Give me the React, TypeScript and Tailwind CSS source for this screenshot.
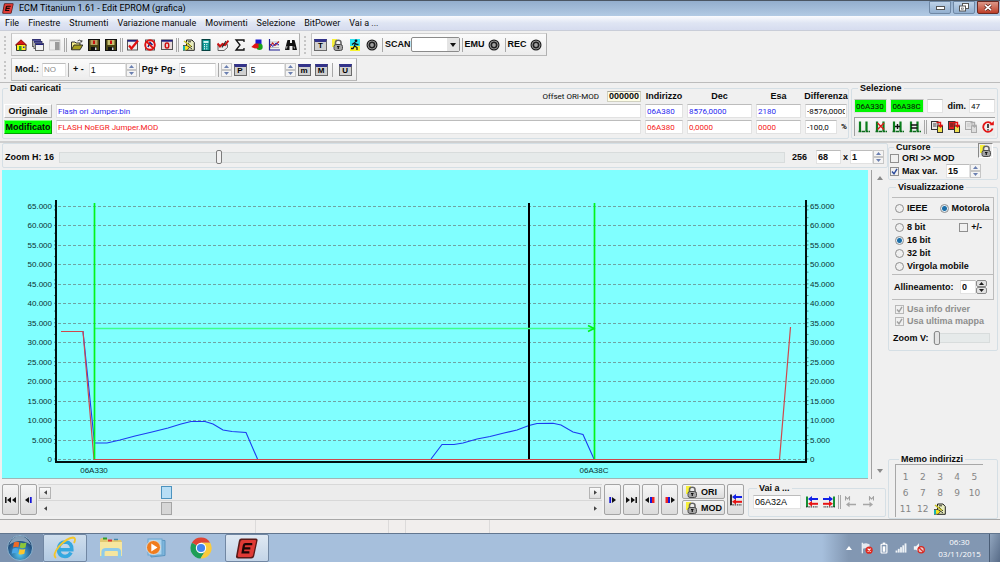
import React from "react";
import clsx from "clsx";

type Kids = { children?: React.ReactNode };

/* ---------- small building blocks ---------- */

function Ico({ children, size = "size-3", box = "0 0 12 12" }: Kids & { size?: string; box?: string }) {
  return (
    <svg viewBox={box} className={clsx("block shrink-0", size)} aria-hidden="true">
      {children}
    </svg>
  );
}

function ToolButton({ label, children }: Kids & { label: string }) {
  return (
    <button type="button" aria-label={label} className="flex h-[18px] w-[17px] shrink-0 items-center justify-center">
      {children}
    </button>
  );
}

function Sep({ double = false }: { double?: boolean }) {
  return (
    <span className="flex w-[5px] shrink-0 justify-center gap-px">
      <span className="h-[14px] w-px bg-[#a8a8a8]" />
      {double && <span className="h-[14px] w-px bg-[#a8a8a8]" />}
    </span>
  );
}

function Grip() {
  return <span className="h-[18px] w-[3px] shrink-0 border-l-2 border-dotted border-[#c6c6c6]" />;
}

function Toolbar({ children, label }: Kids & { label: string }) {
  return (
    <div
      role="toolbar"
      aria-label={label}
      className="flex h-[23px] items-center border border-t-[#d0d0d0] border-r-[#b0b0b0] border-b-[#b8b8b8] border-l-[#c4c4c4] bg-linear-to-b from-[#fbfbfb] to-[#ececec]"
    >
      {children}
    </div>
  );
}

function Spin({ label, dark = false }: { label: string; dark?: boolean }) {
  const fill = dark ? "#1a1a1a" : "#6a7fb0";
  const box = clsx(
    "flex h-[7px] items-center justify-center border",
    dark ? "rounded-[2px] border-[#8a8a8a] bg-[#e2e2e2]" : "border-[#c6c6c6] bg-[#f4f4f4]",
  );
  return (
    <span className="flex h-[14px] w-[11px] shrink-0 flex-col">
      <button type="button" aria-label={label + " su"} className={box}>
        <svg viewBox="0 0 5 3" className="h-[3px] w-[5px]"><path d="M0 3L2.500 0L5 3Z" fill={fill} /></svg>
      </button>
      <button type="button" aria-label={label + " giù"} className={box}>
        <svg viewBox="0 0 5 3" className="h-[3px] w-[5px]"><path d="M0 0L2.500 3L5 0Z" fill={fill} /></svg>
      </button>
    </span>
  );
}

function Field({ value, label, className }: { value: string; label: string; className?: string }) {
  return (
    <input
      type="text"
      aria-label={label}
      defaultValue={value}
      className={clsx(
        "h-[14px] min-w-0 rounded-none border border-[#e2e2e2] border-t-[#bcbcbc] px-px outline-none",
        className,
      )}
    />
  );
}

function LetterIcon({ letter }: { letter: string }) {
  return (
    <span className="flex h-3 w-[13px] items-end justify-center border border-t-[3px] border-[#6a6a6a] border-t-[#33338a] bg-[#d0d0d0] text-[8px] leading-[8px] font-bold text-black">
      {letter}
    </span>
  );
}

function Group({ title, className, children }: Kids & { title: string; className?: string }) {
  return (
    <fieldset className={clsx("min-w-0 rounded-[2px] border border-[#d5dfe5]", className)}>
      <legend className="ml-1 px-[2px] text-[9px] leading-[8px] font-bold whitespace-nowrap">{title}</legend>
      {children}
    </fieldset>
  );
}

/* ---------- icons ---------- */

const Lock = () => (
  <Ico size="size-3">
    <path d="M0 0H5V3H3V8H0Z" fill="#f7f03a" />
    <path d="M3.500 6V3.400Q3.500 1.200 6.200 1.200Q9 1.200 9 3.400V6" fill="none" stroke="#666" strokeWidth="1.600" />
    <rect x="2" y="5.500" width="8.500" height="6" rx="2" fill="#a4a4a4" stroke="#4c4c4c" />
    <path d="M5 7.500H7.500M6.250 7.500V10" stroke="#111" strokeWidth="1.200" />
  </Ico>
);
const Led = () => (
  <Ico>
    <circle cx="6" cy="6" r="5.500" fill="#1e1e1e" />
    <circle cx="6" cy="6" r="4" fill="none" stroke="#9c9c9c" strokeWidth="0.900" />
    <circle cx="6" cy="6" r="1.900" fill="#a0a0a0" />
  </Ico>
);
const Home = () => (
  <Ico>
    <path d="M1.500 6V11.500H11V6L6 2Z" fill="#ffee22" stroke="#333" />
    <path d="M0.500 6L6 0.800L11.500 6L9.500 5.500H2.500Z" fill="#d81818" stroke="#8a0c0c" strokeWidth="0.900" />
    <rect x="4" y="7" width="2.500" height="4.500" fill="#2a9c2a" />
    <rect x="8" y="7.500" width="1.500" height="1.500" fill="#22b" />
  </Ico>
);
const Windows = () => (
  <Ico>
    <g fill="#f2f2f2" stroke="#555" strokeWidth="0.900">
      <rect x="0.500" y="0.500" width="8" height="7" />
      <rect x="2" y="2.500" width="8" height="7" />
      <rect x="3.500" y="4.500" width="8" height="7" />
    </g>
    <path d="M0.500 1H8.500M2 3H10M3.500 5.200H11.500" stroke="#20207c" strokeWidth="1.400" />
  </Ico>
);
const Panel = () => (
  <Ico>
    <rect x="0.500" y="1" width="10.500" height="10" fill="#ececec" stroke="#cfcfcf" />
    <rect x="6" y="3" width="4.500" height="8" fill="#9a9a9a" />
    <path d="M1 1.500H11" stroke="#b5b5b5" strokeWidth="1.500" />
  </Ico>
);
const Folder = () => (
  <Ico>
    <path d="M0.500 10.500V3H4L5 4H9V6" fill="#f4ec8a" stroke="#333" />
    <path d="M0.500 10.800L3 6H11.800L9 10.800Z" fill="#a8a020" stroke="#222" strokeWidth="0.900" />
    <path d="M6.500 2Q9 0 10.500 2.500M10.800 1V3H9" fill="none" stroke="#222" strokeWidth="0.800" />
  </Ico>
);
const Disk = ({ tag }: { tag: string }) => (
  <Ico>
    <rect x="0.500" y="0.500" width="11" height="11" fill="#4a4512" stroke="#111" />
    <rect x="2.500" y="1" width="7" height="5" fill={tag} />
    <path d="M5 1.500H7V5H5Z" fill="#c11" />
    <rect x="3" y="8" width="6" height="3.500" fill="#111" />
    <rect x="7" y="8.500" width="1.500" height="2.500" fill="#ddd" />
  </Ico>
);
const WinCheck = () => (
  <Ico>
    <rect x="0.500" y="1" width="10" height="10" fill="#eee" stroke="#555" />
    <path d="M0.500 1.800H10.500" stroke="#20207c" strokeWidth="1.800" />
    <path d="M2 6.500L4.500 9.500L11 1.500" fill="none" stroke="#e01010" strokeWidth="2.200" />
  </Ico>
);
const WinNo = () => (
  <Ico>
    <rect x="1.500" y="1" width="9" height="10" fill="#eee" stroke="#555" />
    <path d="M4 8L6 3.500L8.500 6" fill="none" stroke="#20207c" strokeWidth="1.500" />
    <circle cx="6" cy="6" r="4.800" fill="none" stroke="#e01010" strokeWidth="1.900" />
    <path d="M2.600 2.600L9.400 9.400" stroke="#e01010" strokeWidth="1.900" />
  </Ico>
);
const WinZero = () => (
  <Ico>
    <rect x="0.500" y="1" width="11" height="9.500" fill="#e8dada" stroke="#555" />
    <path d="M0.500 1.800H11.500" stroke="#20207c" strokeWidth="1.800" />
    <rect x="4.300" y="4" width="3.400" height="5" rx="1.500" fill="none" stroke="#d01010" strokeWidth="1.500" />
  </Ico>
);
const Memo = () => (
  <Ico>
    <path d="M3.500 1H9L11.300 3.500V11.300H3.500Z" fill="#e9edc0" stroke="#222" />
    <path d="M5 4L9 8M5 7L9 10M5 2.800H8" stroke="#222" strokeWidth="0.900" />
    <path d="M1 2L8 7.500" stroke="#c8c020" strokeWidth="1.500" />
    <path d="M0 6.500H4L6.500 8.500L4 11.300H0Z" fill="#f2e21e" stroke="#222" strokeWidth="0.700" />
    <rect x="0" y="7" width="2" height="4.300" fill="#19b0b0" />
  </Ico>
);
const Calc = () => (
  <Ico>
    <rect x="2" y="0.500" width="8" height="11" fill="#0f9a96" stroke="#04403f" />
    <rect x="3.500" y="2" width="5" height="2" fill="#c8f2f0" />
    <path d="M4.500 5V11M6.800 5V11" stroke="#eaffff" strokeWidth="1" strokeDasharray="1.200 0.900" />
  </Ico>
);
const ChartPen = () => (
  <Ico>
    <path d="M1 6V11.500H7L10.500 8.500V5.500L5 6.500Z" fill="#ececec" stroke="#555" strokeWidth="0.900" />
    <path d="M0.500 4.500L3 7.500L5.500 5L8 6L11.500 1.500" fill="none" stroke="#c81414" strokeWidth="2" />
    <path d="M5 8.500L9 2" stroke="#222" strokeWidth="1.100" />
  </Ico>
);
const Sigma = () => (
  <Ico>
    <path d="M10 3V1H2L6 6L2 11H10V9" fill="none" stroke="#111" strokeWidth="1.300" />
  </Ico>
);
const Shapes = () => (
  <Ico>
    <rect x="4.500" y="0.500" width="6" height="5" fill="#1a1ad0" />
    <circle cx="8.500" cy="7.800" r="3.200" fill="#18a018" />
    <path d="M0.300 8L4 4.500H7.500V9L4 9.500Z" fill="#e01414" />
  </Ico>
);
const Graph = () => (
  <Ico>
    <path d="M1.500 0V11H12" fill="none" stroke="#1a1a90" strokeWidth="1.200" />
    <path d="M2 3H11M2 6H11M2 8.500H11" stroke="#999" strokeWidth="0.600" />
    <path d="M2 8L4.500 4L7 6.500L11 2.500" fill="none" stroke="#c02020" strokeWidth="1.100" />
    <path d="M2 5L5 7.500L8 4L11 6" fill="none" stroke="#2020c0" strokeWidth="1" />
  </Ico>
);
const Binoculars = () => (
  <Ico>
    <path d="M2.500 1H5V4H7V1H9.500L10.500 4.500L12 11H7.500V7H4.500V11H0L1.500 4.500Z" fill="#111" />
    <path d="M2 7L1.500 9.500M9 7.500L9.500 9.500" stroke="#ccc" strokeWidth="0.900" />
  </Ico>
);
const Runner = () => (
  <Ico>
    <rect x="1" width="10" height="12" fill="#f7f32a" />
    <rect x="1" width="10" height="7" fill="#2de4f2" />
    <circle cx="7" cy="1.800" r="1.400" fill="#111" />
    <path d="M6.500 3.500L5.500 7L8 8.500V11M5.500 7L4 9.500H2M3 5.500L5.500 3.800L8 5.500H9.500" fill="none" stroke="#111" strokeWidth="1.300" />
  </Ico>
);
const Sel = ({ mid, color }: { mid?: string; color?: string }) => (
  <Ico>
    <path d="M2 0.500V10M8.500 0.500V10" stroke="#0a7d1c" strokeWidth="2.200" />
    <path d="M0.500 10.500H12" stroke="#0a6a1a" strokeWidth="1.700" strokeDasharray="3 0.500" />
    {mid && <path d={mid} stroke={color} strokeWidth="1.400" fill="none" />}
  </Ico>
);
const Pages = ({ front, off }: { front: string; off?: boolean }) => (
  <Ico>
    <rect x="0.500" y="0.500" width="6.500" height="8" fill={front} stroke={off ? "#aaa" : "#333"} />
    <path d="M2 3H5.500M2 5H5.500" stroke={off ? "#bbb" : "#222"} strokeWidth="0.800" />
    <rect x="6.500" y="5" width="5" height="6.500" fill={off ? "#ddd" : "#f0e050"} stroke={off ? "#aaa" : "#333"} />
    <path d="M5.500 1.500H9.500V5M7.500 3.800L9.500 6L11.500 3.800" fill="none" stroke={off ? "#aaa" : "#e01010"} strokeWidth="1.400" />
  </Ico>
);
const Reload = () => (
  <Ico>
    <path d="M9.800 3A4.800 4.800 0 1 0 10.600 7.500" fill="none" stroke="#e31515" strokeWidth="1.800" />
    <path d="M7.500 4.300H11.800V0Z" fill="#e31515" />
    <path d="M6 3V7M6 8.200V9.600" stroke="#111" strokeWidth="1.500" />
  </Ico>
);
const Arrows = ({ flip = false, bar = "#0a8a2a" }: { flip?: boolean; bar?: string }) => (
  <Ico>
    <g transform={flip ? "translate(12 0) scale(-1 1)" : undefined}>
      <path d="M1 0.500V11" stroke={bar} strokeWidth="1.900" />
      <path d="M0 10.900H12" stroke="#222" strokeWidth="1" strokeDasharray="1.500 0.800" />
      <path d="M2 3L6 0V6Z" fill="#1020e8" />
      <path d="M4 3H12" stroke="#1020e8" strokeWidth="2" />
      <path d="M2 7.800L6 5V10.500Z" fill="#e81515" />
      <path d="M4 7.800H12" stroke="#e81515" strokeWidth="2" />
    </g>
  </Ico>
);
const MArrow = ({ flip = false }: { flip?: boolean }) => (
  <Ico>
    <path d="M0.500 4.500V0.800L2.500 3L4.500 0.800V4.500" transform={flip ? "translate(7 0)" : undefined} fill="none" stroke="#a0a0a0" strokeWidth="1.100" />
    <g transform={flip ? "translate(12 0) scale(-1 1)" : undefined}>
      <path d="M1 8.500L4.500 5.800V11.200Z" fill="#a6a6a6" />
      <path d="M4 8.500H11" stroke="#a6a6a6" strokeWidth="1.500" />
    </g>
  </Ico>
);

const EcmLogo = ({ size }: { size: string }) => (
  <svg viewBox="0 0 24 22" className={clsx("block shrink-0", size)} aria-hidden="true">
    <path d="M6 0.500H21.500Q23.500 0.500 23 3L19.500 19Q19 21.500 16.500 21.500H2.500Q0 21.500 0.500 19L3.500 3Q4 0.500 6 0.500Z" fill="#5b1a18" />
    <path d="M7 2H20.500Q21.800 2 21.500 3.500L18.300 18Q18 19.800 16 19.800H3.600Q2 19.800 2.300 18L5 3.800Q5.300 2 7 2Z" fill="#df3a35" />
    <path d="M17.500 6.500H10.500Q9 6.500 8.700 8L7.500 15H14.500M9 10.800H15.500" fill="none" stroke="#1c0606" strokeWidth="2.400" />
  </svg>
);

/* ---------- window chrome ---------- */

function TitleBar() {
  return (
    <header className="flex h-4 items-start justify-between border-t border-[#4b5663] bg-linear-to-b from-[#93aecd] to-[#b2cae4] pl-[2px]">
      <div className="flex h-[15px] items-center gap-[5px]">
        <EcmLogo size="h-[11px] w-3" />
        <h1 className="font-[Roboto,sans-serif] text-[9px] text-black">ECM Titanium 1.61 - Edit EPROM (grafica)</h1>
      </div>
      <div className="flex gap-[2px] pr-px">
        <button type="button" aria-label="Riduci a icona" className="flex h-[13px] w-[22px] items-center justify-center rounded-b-[2px] border border-[#6f88a5] bg-linear-to-b from-[#bed2e8] to-[#92afcf]">
          <svg viewBox="0 0 9 4" className="h-1 w-[9px]"><rect x="0.500" y="0.500" width="8" height="3" fill="#fff" stroke="#555" /></svg>
        </button>
        <button type="button" aria-label="Ripristina" className="flex h-[13px] w-[22px] items-center justify-center rounded-b-[2px] border border-[#6f88a5] bg-linear-to-b from-[#bed2e8] to-[#92afcf]">
          <svg viewBox="0 0 10 9" className="h-[9px] w-[10px]" fill="#fff" stroke="#555"><rect x="3.500" y="0.500" width="6" height="5" /><rect x="0.500" y="3" width="6" height="5" /><rect x="2.500" y="5" width="2" height="1.200" strokeWidth="0.600" /></svg>
        </button>
        <button type="button" aria-label="Chiudi" className="flex h-[13px] w-[22px] items-center justify-center rounded-b-[2px] border border-[#6b2a22] bg-linear-to-b from-[#dc9788] to-[#bd3c26]">
          <svg viewBox="0 0 8 7" className="h-[7px] w-2"><path d="M1 0.800L7 6.200M7 0.800L1 6.200" stroke="#5a2018" strokeWidth="3" /><path d="M1 0.800L7 6.200M7 0.800L1 6.200" stroke="#fff" strokeWidth="1.700" /></svg>
        </button>
      </div>
    </header>
  );
}

const menus = ["File", "Finestre", "Strumenti", "Variazione manuale", "Movimenti", "Selezione", "BitPower", "Vai a ..."];

function MenuBar() {
  return (
    <nav className="flex h-[15px] items-center gap-[9px] border-b border-[#c9cdd8] bg-linear-to-b from-[#fafbfe] via-[#dfe5f3] to-[#d6dcef] pl-[5px] font-[Roboto,sans-serif] text-[9px]">
      {menus.map((m) => (
        <button key={m} type="button" className="leading-[14px] whitespace-nowrap">{m}</button>
      ))}
    </nav>
  );
}

function Toolbars() {
  return (
    <div className="flex flex-col gap-[2px] border-b border-[#bcbcbc] px-1 pt-[2px] pb-px">
      <div className="flex items-center gap-1">
        <Grip />
        <Toolbar label="Principale">
          <ToolButton label="Home"><Home /></ToolButton>
          <ToolButton label="Finestre"><Windows /></ToolButton>
          <ToolButton label="Pannello"><Panel /></ToolButton>
          <Sep double />
          <ToolButton label="Apri"><Folder /></ToolButton>
          <ToolButton label="Salva originale"><Disk tag="#b8a060" /></ToolButton>
          <ToolButton label="Salva modificato"><Disk tag="#c8c070" /></ToolButton>
          <Sep double />
          <ToolButton label="Conferma"><WinCheck /></ToolButton>
          <ToolButton label="Annulla"><WinNo /></ToolButton>
          <ToolButton label="Azzera"><WinZero /></ToolButton>
          <Sep double />
          <ToolButton label="Note"><Memo /></ToolButton>
          <ToolButton label="Calcolatrice"><Calc /></ToolButton>
          <ToolButton label="Modifica grafico"><ChartPen /></ToolButton>
          <ToolButton label="Checksum"><Sigma /></ToolButton>
          <ToolButton label="Grafica 3D"><Shapes /></ToolButton>
          <ToolButton label="Grafica 2D"><Graph /></ToolButton>
          <ToolButton label="Cerca"><Binoculars /></ToolButton>
        </Toolbar>
        <Grip />
        <Toolbar label="Emulazione">
          <ToolButton label="Tabella"><LetterIcon letter="T" /></ToolButton>
          <ToolButton label="Blocca"><Lock /></ToolButton>
          <ToolButton label="Esegui"><Runner /></ToolButton>
          <ToolButton label="Stato"><Led /></ToolButton>
          <Sep />
          <label htmlFor="scan" className="text-[9px] font-bold">SCAN</label>
          <span className="relative flex">
            <select id="scan" className="h-[15px] w-[49px] appearance-none rounded-[2px] border border-[#8b8b8b] bg-white" defaultValue="">
              <option value=""></option>
            </select>
            <span className="pointer-events-none absolute inset-y-px right-px flex w-3 items-center justify-center bg-[#e4e4e4]">
              <svg viewBox="0 0 6 4" className="h-1 w-[6px]"><path d="M0 0H6L3 4Z" fill="#111" /></svg>
            </span>
          </span>
          <Sep />
          <span className="text-[9px] font-bold">EMU</span>
          <span className="pl-px"><ToolButton label="EMU"><Led /></ToolButton></span>
          <Sep />
          <span className="text-[9px] font-bold">REC</span>
          <span className="px-px"><ToolButton label="REC"><Led /></ToolButton></span>
        </Toolbar>
      </div>
      <div className="flex items-center gap-1">
        <Grip />
        <Toolbar label="Variazione">
          <span className="px-[3px] text-[9px] font-bold">Mod.:</span>
          <Field label="Modo" value="NO" className="w-6 bg-white text-[8px] text-[#8a8a8a]" />
          <Sep />
          <span className="px-[2px] text-[9px] font-bold">+ -</span>
          <span className="flex pl-[3px]"><Field label="Passo" value="1" className="w-[37px] bg-white text-[9px]" /></span>
          <Spin label="Passo" />
          <Sep />
          <span className="pr-[3px] text-[9px] font-bold whitespace-nowrap">Pg+ Pg-</span>
          <Field label="Pagina" value="5" className="w-[37px] bg-white text-[9px]" />
          <Sep />
          <Spin label="Pagina" />
          <ToolButton label="Percentuale"><LetterIcon letter="P" /></ToolButton>
          <Field label="Percentuale" value="5" className="w-9 bg-white text-[9px]" />
          <Spin label="Percentuale" />
          <ToolButton label="Minimo"><LetterIcon letter="m" /></ToolButton>
          <ToolButton label="Massimo"><LetterIcon letter="M" /></ToolButton>
          <Sep />
          <span className="px-[2px]"><ToolButton label="Uguale"><LetterIcon letter="U" /></ToolButton></span>
        </Toolbar>
      </div>
    </div>
  );
}

/* ---------- loaded data and selection ---------- */

function LoadedData() {
  return (
    <Group title="Dati caricati" className="flex-1 px-px">
      <div className="-mx-1 -mt-[3px]">
        <table className="w-full table-fixed border-separate border-spacing-x-1 border-spacing-y-[2px] text-left">
          <colgroup>
            <col className="w-[48px]" /><col /><col className="w-[38px]" /><col className="w-[65px]" /><col className="w-[45px]" /><col className="w-[42px]" />
          </colgroup>
          <thead className="text-center text-[9px] leading-[9px] font-bold whitespace-nowrap">
            <tr>
              <td className="p-0" />
              <td className="p-0">
                <div className="flex items-center justify-end gap-2">
                  <span className="font-[Roboto,sans-serif] text-[8px] font-normal">Offset ORI-MOD</span>
                  <span className="w-[34px] border border-[#d0d0c0] border-t-[#a8a8a0] bg-[#fdfde6] leading-[9px]">000000</span>
                </div>
              </td>
              <th className="p-0">Indirizzo</th>
              <th className="p-0">Dec</th>
              <th className="p-0">Esa</th>
              <th className="p-0"><div className="flex justify-center">Differenza</div></th>
            </tr>
          </thead>
          <tbody className="font-[Roboto,sans-serif] text-[8px] leading-none">
            <tr>
              <td className="p-0"><button type="button" className="block h-[14px] w-full border border-white border-r-[#b5b5b5] border-b-[#b5b5b5] font-['Liberation_Sans',Arial,sans-serif] text-[9px] leading-3 font-bold">Originale</button></td>
              <td className="p-0"><Field label="File originale" value="Flash ori Jumper.bin" className="block w-full bg-white text-[#2a2af0]" /></td>
              <td className="p-0"><Field label="Indirizzo originale" value="06A380" className="block w-full bg-white text-[#2a2af0]" /></td>
              <td className="p-0"><Field label="Decimale originale" value="8576,0000" className="block w-full bg-white text-[#2a2af0]" /></td>
              <td className="p-0"><Field label="Esadecimale originale" value="2180" className="block w-full bg-white text-[#2a2af0]" /></td>
              <td className="p-0"><Field label="Differenza" value="-8576,0000" className="block w-full bg-white" /></td>
            </tr>
            <tr>
              <td className="p-0"><button type="button" className="block h-[14px] w-full border border-[#7dff7d] border-r-[#00a000] border-b-[#00a000] bg-[#00ff00] font-['Liberation_Sans',Arial,sans-serif] text-[9px] leading-3 font-bold">Modificato</button></td>
              <td className="p-0"><Field label="File modificato" value="FLASH NoEGR Jumper.MOD" className="block w-full bg-white text-[#f52020]" /></td>
              <td className="p-0"><Field label="Indirizzo modificato" value="06A380" className="block w-full bg-white text-[#f52020]" /></td>
              <td className="p-0"><Field label="Decimale modificato" value="0,0000" className="block w-full bg-white text-[#f52020]" /></td>
              <td className="p-0"><Field label="Esadecimale modificato" value="0000" className="block w-full bg-white text-[#f52020]" /></td>
              <td className="p-0">
                <div className="flex items-center justify-between">
                  <Field label="Differenza percentuale" value="-100,0" className="w-8 bg-white" />
                  <span className="font-bold">%</span>
                </div>
              </td>
            </tr>
          </tbody>
        </table>
      </div>
    </Group>
  );
}

function Selection() {
  return (
    <Group title="Selezione" className="w-[147px] px-[2px] pb-[2px]">
      <div className="flex items-center gap-[3px] pt-[7px] font-[Roboto,sans-serif] text-[8px]">
        <Field label="Inizio" value="06A330" className="w-[34px] border-[#00f400] border-t-[#00f400] bg-[#00f400]" />
        <Field label="Fine" value="06A38C" className="w-[34px] border-[#00f400] border-t-[#00f400] bg-[#00f400]" />
        <Field label="Filtro" value="" className="w-4 bg-white" />
        <label htmlFor="dim" className="pl-[2px] font-['Liberation_Sans',Arial,sans-serif] text-[9px] font-bold">dim.</label>
        <input id="dim" defaultValue="47" className="h-[14px] w-[26px] border border-[#e2e2e2] border-t-[#bcbcbc] bg-white px-px" />
      </div>
      <div className="mt-1 flex h-[19px] items-center border-t border-l border-[#a0a0a0] bg-linear-to-b from-[#f8f8f8] to-[#e9e9e9]">
        <ToolButton label="Seleziona"><Sel /></ToolButton>
        <ToolButton label="Deseleziona"><Sel mid="M2.500 2L9 8.500M9 2L2.500 8.500" color="#e01818" /></ToolButton>
        <ToolButton label="Estendi"><Sel mid="M3 5.500H8M5.500 3V8" color="#111" /></ToolButton>
        <ToolButton label="Uguaglia"><Sel mid="M2 4H8.500M2 7H8.500" color="#111" /></ToolButton>
        <Sep double />
        <ToolButton label="Copia"><Pages front="#e8e8e8" /></ToolButton>
        <ToolButton label="Incolla"><Pages front="#e02020" /></ToolButton>
        <ToolButton label="Incolla speciale"><Pages front="#e4e4e4" off /></ToolButton>
        <ToolButton label="Ripristina"><Reload /></ToolButton>
      </div>
    </Group>
  );
}

/* ---------- chart ---------- */

const scale = [65, 60, 55, 50, 45, 40, 35, 30, 25, 20, 15, 10, 5, 0];
const rows = scale.map((v) => ({ text: v === 0 ? "0" : v + ".000", y: Math.round(289 - (v * 253) / 65) }));
const ticks = Array.from({ length: 66 }, (_, i) => 289 - (i * 253) / 65);
const blueLine =
  "75,161.500 81,161.500 92.500,273 105,273 118,270 133,266 150,262 166,258 179,254 189,251.500 203,251.500 211,254 221,260 230,261.500 244,262.500 255.500,289";
const blueTail =
  "429,289 440,274.500 452,274.500 461,273 475,269 488,266.500 502,263 515,260 527,255.500 535,253.500 551,253.300 559,255 571,262 581,264.500 592,289";
const redLine = "59,161.500 81,161.500 92,289.500 777.500,289.500 788.500,157";

function EpromChart() {
  return (
    <svg viewBox="0 0 866 308" role="img" aria-label="Grafico EPROM" className="block w-full bg-[#80ffff] font-['Liberation_Sans',Arial,sans-serif] text-[8px]">
      <g stroke="#6fa3a3" strokeDasharray="3 2">
        {rows.map((r) => <path key={r.text} d={`M56 ${r.y + 0.5}H803`} />)}
      </g>
      <g fill="#0b3030">
        {rows.map((r) => <text key={r.text} x="50" y={r.y + 3} textAnchor="end">{r.text}</text>)}
        {rows.map((r) => <text key={r.text} x="808" y={r.y + 3}>{r.text}</text>)}
        <text x="92" y="303" textAnchor="middle">06A330</text>
        <text x="592" y="303" textAnchor="middle">06A38C</text>
      </g>
      <g stroke="#205050" strokeWidth="0.600">
        {ticks.map((y, i) => (i % 5 && i % 2 ? null : <path key={i} d={`M52 ${y}H54M804 ${y}H806.500`} />))}
      </g>
      <path d="M54 30V292H804V30" fill="none" stroke="#001010" strokeWidth="2" />
      <polyline points={blueLine} fill="none" stroke="#1c3cf0" strokeWidth="1.100" />
      <polyline points={blueTail} fill="none" stroke="#1c3cf0" strokeWidth="1.100" />
      <polyline points={redLine} fill="none" stroke="#d0484c" strokeWidth="1.200" />
      <path d="M527 33V289" stroke="#000" strokeWidth="2" />
      <path d="M93 158.500H592" stroke="#3cff8c" strokeWidth="1.500" />
      <path d="M92.500 33V289M592.500 33V289M586 155.500L592 158.500L586 161.500" fill="none" stroke="#00f41c" strokeWidth="1.700" />
    </svg>
  );
}

function ZoomRow() {
  return (
    <div className="ml-[2px] flex h-[25px] items-center rounded-[2px] border border-[#d5dfe5] pt-[3px] pr-[3px] pl-[2px] text-[9px] font-bold">
      <label htmlFor="zoomh" className="w-[54px] whitespace-nowrap">Zoom H: 16</label>
      <input
        id="zoomh" type="range" min="0" max="1000" defaultValue="217"
        className="h-[14px] min-w-0 flex-1 appearance-none bg-transparent [&::-webkit-slider-runnable-track]:h-[11px] [&::-webkit-slider-runnable-track]:border [&::-webkit-slider-runnable-track]:border-[#d8dcdc] [&::-webkit-slider-runnable-track]:bg-[#e6eaea] [&::-webkit-slider-thumb]:mt-[-3px] [&::-webkit-slider-thumb]:h-[14px] [&::-webkit-slider-thumb]:w-[6px] [&::-webkit-slider-thumb]:appearance-none [&::-webkit-slider-thumb]:rounded-[2px] [&::-webkit-slider-thumb]:border [&::-webkit-slider-thumb]:border-[#7c7c7c] [&::-webkit-slider-thumb]:bg-[#f1f1f1]"
      />
      <span className="w-[31px] pl-[7px]">256</span>
      <Field label="Righe" value="68" className="w-[25px] bg-white" />
      <span className="w-[9px] text-center">x</span>
      <Field label="Colonne" value="1" className="w-[23px] bg-white" />
      <Spin label="Colonne" />
    </div>
  );
}

/* ---------- bottom navigation ---------- */

function NavButton({ label, children }: Kids & { label: string }) {
  return (
    <button type="button" aria-label={label} className="flex h-[31px] w-[17px] shrink-0 items-center justify-center rounded-[2px] border border-[#a4a4a4] bg-linear-to-b from-[#f6f6f6] to-[#dcdcdc]">
      <svg viewBox="0 0 11 6" className="h-[6px] w-[11px]">{children}</svg>
    </button>
  );
}

function ScrollLine({ active = false, label }: { active?: boolean; label: string }) {
  const cap = clsx(
    "flex h-3 w-3 items-center justify-center",
    active && "border border-[#b4b4b4] bg-linear-to-b from-[#fafafa] to-[#dedede]",
  );
  return (
    <div className="flex h-4 items-center border-t border-[#d8d8d8] bg-[#ececec] px-px">
      <button type="button" aria-label={label + " indietro"} className={cap}>
        <svg viewBox="0 0 4 6" className="h-[5px] w-[3px]"><path d="M4 0V6L0 3Z" fill="#444" /></svg>
      </button>
      <input
        type="range" aria-label={label} min="0" max="1000" defaultValue="209"
        className={clsx(
          "h-[13px] min-w-0 flex-1 appearance-none bg-transparent [&::-webkit-slider-thumb]:h-[13px] [&::-webkit-slider-thumb]:w-[11px] [&::-webkit-slider-thumb]:appearance-none [&::-webkit-slider-thumb]:border",
          active
            ? "[&::-webkit-slider-thumb]:border-[#4c93bf] [&::-webkit-slider-thumb]:bg-[#b8def5]"
            : "[&::-webkit-slider-thumb]:border-[#a5a5a5] [&::-webkit-slider-thumb]:bg-[#d6d6d6]",
        )}
      />
      <button type="button" aria-label={label + " avanti"} className={cap}>
        <svg viewBox="0 0 4 6" className="h-[5px] w-[3px]"><path d="M0 0V6L4 3Z" fill="#444" /></svg>
      </button>
    </div>
  );
}

function LockButton({ text }: { text: string }) {
  return (
    <button type="button" className="flex h-[15px] w-[43px] items-center gap-[3px] rounded-[2px] border border-[#a4a4a4] bg-linear-to-b from-[#f6f6f6] to-[#dcdcdc] pl-[3px] text-[9px] leading-[12px] font-bold">
      <Lock />
      {text}
    </button>
  );
}

function BottomBar() {
  return (
    <div className="flex items-start pt-[5px] pb-[2px] pl-[2px]">
      <div className="flex gap-px">
        <NavButton label="Inizio"><path d="M6 0V6L2 3ZM11 0V6L7 3Z" fill="#111" /><path d="M0.800 0V6" stroke="#111" strokeWidth="1.500" /></NavButton>
        <NavButton label="Indietro"><path d="M6 0V6L2 3Z" fill="#111" /><path d="M7.800 0V6" stroke="#1616d8" strokeWidth="1.800" /></NavButton>
      </div>
      <div className="ml-px flex min-w-0 flex-1 flex-col">
        <ScrollLine active label="Scorrimento originale" />
        <ScrollLine label="Scorrimento modificato" />
      </div>
      <div className="flex gap-[2px] pr-1 pl-[2px]">
        <NavButton label="Avanti"><path d="M5 0V6L9 3Z" fill="#111" /><path d="M3.200 0V6" stroke="#1616d8" strokeWidth="1.800" /></NavButton>
        <NavButton label="Fine"><path d="M0 0V6L4 3ZM5 0V6L9 3Z" fill="#111" /><path d="M10.200 0V6" stroke="#111" strokeWidth="1.500" /></NavButton>
        <NavButton label="Differenza precedente"><path d="M4 0V6L0 3Z" fill="#111" /><path d="M5 0H7V6H5Z" fill="#1616d8" /><path d="M7 0H9.500V6H7Z" fill="#e22" /></NavButton>
        <NavButton label="Differenza successiva"><path d="M7 0V6L11 3Z" fill="#111" /><path d="M1.500 0H4V6H1.500Z" fill="#e22" /><path d="M4 0H6V6H4Z" fill="#1616d8" /></NavButton>
      </div>
      <div className="flex flex-col gap-px">
        <LockButton text="ORI" />
        <LockButton text="MOD" />
      </div>
      <button type="button" aria-label="Sincronizza" className="ml-[2px] flex h-[31px] w-[17px] items-center justify-center rounded-[2px] border border-[#a4a4a4] bg-linear-to-b from-[#f6f6f6] to-[#dcdcdc]">
        <Arrows bar="#222" />
      </button>
      <Group title="Vai a ..." className="mr-[2px] ml-1 h-[33px] w-[138px] px-1">
        <div className="flex items-center pt-px">
          <Field label="Vai a indirizzo" value="06A32A" className="w-12 bg-white text-[9px]" />
          <span className="pl-[2px]"><ToolButton label="Inizio"><Arrows /></ToolButton></span>
          <ToolButton label="Fine"><Arrows flip /></ToolButton>
          <Sep double />
          <ToolButton label="Mappa precedente"><MArrow /></ToolButton>
          <ToolButton label="Mappa successiva"><MArrow flip /></ToolButton>
        </div>
      </Group>
    </div>
  );
}

/* ---------- side panel ---------- */

function Check({ label, checked = false, disabled = false }: { label: string; checked?: boolean; disabled?: boolean }) {
  return (
    <label className={clsx("flex h-3 items-center gap-[3px] text-[9px] font-bold whitespace-nowrap", disabled && "text-[#8e8e8e]")}>
      <span className="relative flex">
        <input type="checkbox" defaultChecked={checked} disabled={disabled} className={clsx("peer size-[9px] appearance-none border bg-[#f0f0f0]", disabled ? "border-[#b8b8b8]" : "border-[#8f8f8f]")} />
        <svg viewBox="0 0 9 9" className="pointer-events-none absolute inset-0 hidden size-[9px] peer-checked:block">
          <path d="M2 4.500L4 6.800L7 1.800" fill="none" stroke={disabled ? "#a0a0a0" : "#2b4a9c"} strokeWidth="1.400" />
        </svg>
      </span>
      {label}
    </label>
  );
}

function Radio({ label, name, checked = false }: { label: string; name: string; checked?: boolean }) {
  return (
    <label className="flex h-[13px] items-center gap-[3px] text-[9px] font-bold whitespace-nowrap">
      <input
        type="radio" name={name} defaultChecked={checked}
        className="size-[9px] shrink-0 appearance-none rounded-full border border-[#8f8f8f] bg-[#f0f0f0] checked:bg-[radial-gradient(circle,#1c6ea8_0_2px,#e4eef5_3px)]"
      />
      {label}
    </label>
  );
}

const memoCells = ["1", "2", "3", "4", "5", "6", "7", "8", "9", "10", "11", "12"];

function SidePanel() {
  return (
    <aside className="flex w-[112px] shrink-0 flex-col pr-[2px]">
      <div className="relative">
        <Group title="Cursore" className="pb-px pl-px">
          <div className="flex flex-col pt-px">
            <Check label="ORI >> MOD" />
            <div className="flex items-center">
              <span className="w-14"><Check label="Max var." checked /></span>
              <Field label="Variazione massima" value="15" className="w-6 bg-white text-[9px] font-bold" />
              <Spin label="Variazione massima" />
            </div>
          </div>
        </Group>
        <button type="button" aria-label="Blocca cursore" className="absolute top-0 right-[5px] flex size-[15px] items-center justify-center border border-[#888] border-r-white border-b-white bg-[#ececec]">
          <Lock />
        </button>
      </div>
      <Group title="Visualizzazione" className="mt-[3px] pr-[3px] pb-[5px] pl-[3px]">
        <div className="mt-[6px] border-t border-r border-[#bcbcbc]">
          <div className="flex items-center gap-3 border-b border-[#bcbcbc] py-1 pl-[3px]">
            <Radio name="cpu" label="IEEE" />
            <Radio name="cpu" label="Motorola" checked />
          </div>
          <div className="flex justify-between border-b border-[#bcbcbc] pt-px pr-[11px] pb-px pl-[3px]">
            <div>
              <Radio name="bits" label="8 bit" />
              <Radio name="bits" label="16 bit" checked />
              <Radio name="bits" label="32 bit" />
              <div className="w-12"><Radio name="bits" label="Virgola mobile" /></div>
            </div>
            <Check label="+/-" />
          </div>
          <div className="flex h-[25px] items-center justify-between border-b border-[#bcbcbc] pr-[6px] pl-[2px] text-[9px] font-bold">
            <span>Allineamento:</span>
            <span className="flex items-center bg-white">
              <Field label="Allineamento" value="0" className="w-4 bg-white" />
              <Spin label="Allineamento" dark />
            </span>
          </div>
        </div>
        <div className="pt-[3px] pl-[3px]">
          <Check label="Usa info driver" checked disabled />
          <Check label="Usa ultima mappa" checked disabled />
        </div>
        <div className="flex items-center gap-1 pt-1 pl-px text-[9px] font-bold">
          <label htmlFor="zoomv" className="whitespace-nowrap">Zoom V:</label>
          <input
            id="zoomv" type="range" min="0" max="100" defaultValue="0"
            className="h-[14px] w-[57px] appearance-none bg-transparent [&::-webkit-slider-runnable-track]:h-[10px] [&::-webkit-slider-runnable-track]:border [&::-webkit-slider-runnable-track]:border-[#d8dcdc] [&::-webkit-slider-runnable-track]:bg-[#e6eaea] [&::-webkit-slider-thumb]:mt-[-3px] [&::-webkit-slider-thumb]:h-[14px] [&::-webkit-slider-thumb]:w-[6px] [&::-webkit-slider-thumb]:appearance-none [&::-webkit-slider-thumb]:rounded-[2px] [&::-webkit-slider-thumb]:border [&::-webkit-slider-thumb]:border-[#8c8c8c] [&::-webkit-slider-thumb]:bg-[#e4e4e4]"
          />
        </div>
      </Group>
      <Group title="Memo indirizzi" className="mt-auto pr-[14px] pb-px pl-[6px]">
        <div className="mt-px grid grid-cols-5 border-t border-l border-[#a8a8a8] pt-1 pl-px">
          {memoCells.map((n) => (
            <button key={n} type="button" className="h-4 font-['DejaVu_Sans',Verdana,sans-serif] text-[9px] text-[#858585]">{n}</button>
          ))}
          <button type="button" aria-label="Modifica memo" className="flex h-4 items-center justify-center"><Memo /></button>
        </div>
      </Group>
    </aside>
  );
}

/* ---------- taskbar ---------- */

function Taskbar() {
  return (
    <footer className="flex h-[29px] shrink-0 items-stretch justify-between border-t border-[#62768f] bg-[#a6bfdc]">
      <div className="flex items-stretch">
        <button type="button" aria-label="Start" className="flex w-[43px] items-center bg-[#7d93b0] pl-[7px]">
          <svg viewBox="0 0 26 26" className="size-[26px]">
            <defs>
              <radialGradient id="orb" cx="50%" cy="75%" r="65%"><stop offset="0" stopColor="#55c8ee" /><stop offset="0.600" stopColor="#2b6ba0" /><stop offset="1" stopColor="#1d3e66" /></radialGradient>
            </defs>
            <circle cx="13" cy="13" r="12.500" fill="url(#orb)" stroke="#8fb4cf" />
            <path d="M2 10Q13 2 24 10Q20 1 13 1Q5 1 2 10Z" fill="#c8dcea" opacity="0.600" />
            <path d="M7 7.500Q10 6 12.300 7.300L11.400 12.300Q9 11.200 6 12.500Z" fill="#ee6a26" />
            <path d="M13.600 7.600Q16 9 19.500 7.500L18.500 12.500Q15.500 13.800 12.700 12.500Z" fill="#8cc63a" />
            <path d="M5.700 13.800Q8.500 12.500 11.200 13.700L10.200 18.500Q7.500 17.500 4.700 18.700Z" fill="#4aa7e8" />
            <path d="M12.500 14Q15.500 15.200 18.300 13.900L17.300 18.800Q14 20.300 11.500 18.900Z" fill="#fbc62e" />
          </svg>
        </button>
        <button type="button" aria-label="Internet Explorer" className="flex w-11 items-center justify-center rounded-[2px] border border-[#7187a3] bg-linear-to-b from-[#cfdeed] to-[#b1c9e2]">
          <svg viewBox="0 0 24 24" className="size-6">
            <path d="M18 16.500Q16 20.500 12 20.500Q5.500 20 5.500 13Q6 6 12.500 6Q19 6.500 18.800 13.700H7" fill="none" stroke="#35a8e0" strokeWidth="3.600" />
            <path d="M3 22Q-1 19 6 10.500Q14 2 20 1.500Q23.500 2 21 7" fill="none" stroke="#f3c62c" strokeWidth="1.900" />
          </svg>
        </button>
        <button type="button" aria-label="Esplora risorse" className="flex w-[47px] items-center justify-center">
          <svg viewBox="0 0 24 24" className="size-6">
            <path d="M1 3L3 2H8L9 4H22L23 6V19H1Z" fill="#e2c970" />
            <path d="M4 2.500H8" stroke="#2f9c2f" strokeWidth="2" /><path d="M9 4.500H13" stroke="#d33" strokeWidth="2" /><path d="M15 3.500H19" stroke="#48a" strokeWidth="1.500" />
            <path d="M1 6H23V20H1Z" fill="#f6e69f" />
            <path d="M4 22V16Q4 13.500 7 13.500H18Q20.500 13.500 20.500 16V22" fill="none" stroke="#8fcbea" strokeWidth="3.200" />
          </svg>
        </button>
        <button type="button" aria-label="Media Player" className="flex w-[43px] items-center justify-center">
          <svg viewBox="0 0 22 20" className="h-5 w-[22px]">
            <path d="M4 1.500L20 2.500V17.500L6 19Z" fill="#7db5dc" stroke="#5a94be" />
            <rect x="3" y="1" width="14" height="16" fill="#a9d3ee" stroke="#6da6ce" />
            <circle cx="8.500" cy="9.500" r="7" fill="#f07c1d" stroke="#d8eaf5" strokeWidth="0.800" />
            <path d="M6.300 5.500L12.500 9.500L6.300 13.500Z" fill="#fff" />
          </svg>
        </button>
        <button type="button" aria-label="Chrome" className="flex w-12 items-center justify-center">
          <svg viewBox="0 0 22 22" className="size-[22px]">
            <path d="M11 11L1.900 5.700A10.500 10.500 0 0 1 20.200 5.800H11Z" fill="#df4434" />
            <path d="M11 11L1.900 5.700A10.500 10.500 0 0 0 10.500 21.500L15.500 13.500Z" fill="#1f9e57" />
            <path d="M11 5.800H20.200A10.500 10.500 0 0 1 10.500 21.500L15.500 13.500Z" fill="#fbcb3b" />
            <circle cx="11" cy="11" r="5.200" fill="#fff" /><circle cx="11" cy="11" r="4.100" fill="#4285f0" />
          </svg>
        </button>
        <button type="button" aria-label="ECM Titanium" className="flex w-11 items-center justify-center rounded-[2px] border border-[#7187a3] bg-linear-to-b from-[#e0e9f3] to-[#c3d4e7]">
          <EcmLogo size="h-[21px] w-6" />
        </button>
      </div>
      <div className="flex items-stretch bg-linear-to-r from-[#a6bfdc] to-[#8297b2] to-15% pl-6 text-white">
        <div className="flex items-center gap-[6px]">
          <svg viewBox="0 0 6 4" className="h-1 w-[6px]"><path d="M0 4L3 0L6 4Z" fill="#fff" /></svg>
          <svg viewBox="0 0 14 14" className="ml-[3px] size-3">
            <path d="M1.500 1V13" stroke="#fff" strokeWidth="1.300" /><path d="M2 2L6 1.500L10 2.500V8L6 7L2 8Z" fill="#e4e8ee" />
            <circle cx="9.500" cy="9.500" r="4.200" fill="#df2a20" /><path d="M7.800 7.800L11.200 11.200M11.200 7.800L7.800 11.200" stroke="#fff" strokeWidth="1.300" />
          </svg>
          <svg viewBox="0 0 12 14" className="h-3 w-[10px]"><rect x="2.500" y="2.500" width="7" height="10.500" rx="1" fill="#8297b2" stroke="#fff" strokeWidth="1.400" /><rect x="4.500" y="0.500" width="3" height="2" fill="#fff" /><rect x="4.500" y="5" width="3" height="6.500" fill="#fff" /></svg>
          <svg viewBox="0 0 14 12" className="h-[10px] w-3" fill="#eef2f6"><rect x="0.500" y="9" width="2.200" height="2.500" /><rect x="3.200" y="7" width="2.200" height="4.500" /><rect x="5.900" y="5" width="2.200" height="6.500" /><rect x="8.600" y="2.800" width="2.200" height="8.700" /><rect x="11.300" y="0.500" width="2.200" height="11" /></svg>
          <svg viewBox="0 0 14 14" className="size-3">
            <path d="M1 5H3.500L7 1.500V12L3.500 9H1Z" fill="#eef2f6" />
            <circle cx="9.500" cy="9" r="3.700" fill="#e9c4c4" stroke="#d8261e" strokeWidth="1.500" /><path d="M7 6.500L12 11.500" stroke="#d8261e" strokeWidth="1.400" />
          </svg>
        </div>
        <time className="flex w-16 flex-col justify-center pl-[5px] text-center font-['Open_Sans','Noto_Sans',sans-serif] text-[8px] leading-3">
          <span>06:30</span>
          <span>03/11/2015</span>
        </time>
        <button type="button" aria-label="Mostra desktop" className="w-[11px] border-l border-[#4a5d76] bg-linear-to-br from-[#92a6bf] to-[#586c88]" />
      </div>
    </footer>
  );
}

/* ---------- page ---------- */

export default function App() {
  return (
    <div className="flex min-h-screen flex-col bg-[#f0f0f0] font-['Liberation_Sans',Arial,sans-serif] leading-none text-[#0a0a0a]">
      <TitleBar />
      <MenuBar />
      <Toolbars />
      <div className="flex gap-[2px] border-b-2 border-[#cfcfcf] px-[2px] pt-px pb-[2px]">
        <LoadedData />
        <Selection />
      </div>
      <main className="flex flex-1 items-stretch">
        <div className="flex min-w-0 flex-1 flex-col">
          <ZoomRow />
          <div className="mt-[2px] flex pl-[2px]">
            <div className="min-w-0 flex-1 border-b border-[#9fb5b5]"><EpromChart /></div>
            <div className="ml-[3px] flex w-[17px] flex-col items-center justify-between border-l border-[#a0a0a0] py-[6px]">
              <button type="button" aria-label="Scorri su"><svg viewBox="0 0 6 4" className="h-1 w-[6px]"><path d="M0 4L3 0L6 4Z" fill="#8a8a8a" /></svg></button>
              <button type="button" aria-label="Scorri giù"><svg viewBox="0 0 6 4" className="h-1 w-[6px]"><path d="M0 0L3 4L6 0Z" fill="#8a8a8a" /></svg></button>
            </div>
          </div>
          <BottomBar />
        </div>
        <SidePanel />
      </main>
      <div className="flex h-[14px] shrink-0 border-t border-[#a8a8a8] bg-[#f1eeed]">
        <span className="w-64 border-r border-[#dcdada]" />
        <span className="w-[133px] border-r border-[#dcdada]" />
        <span className="w-[17px] border-r border-[#dcdada]" />
        <span className="w-[84px] border-r border-[#dcdada]" />
      </div>
      <Taskbar />
    </div>
  );
}
